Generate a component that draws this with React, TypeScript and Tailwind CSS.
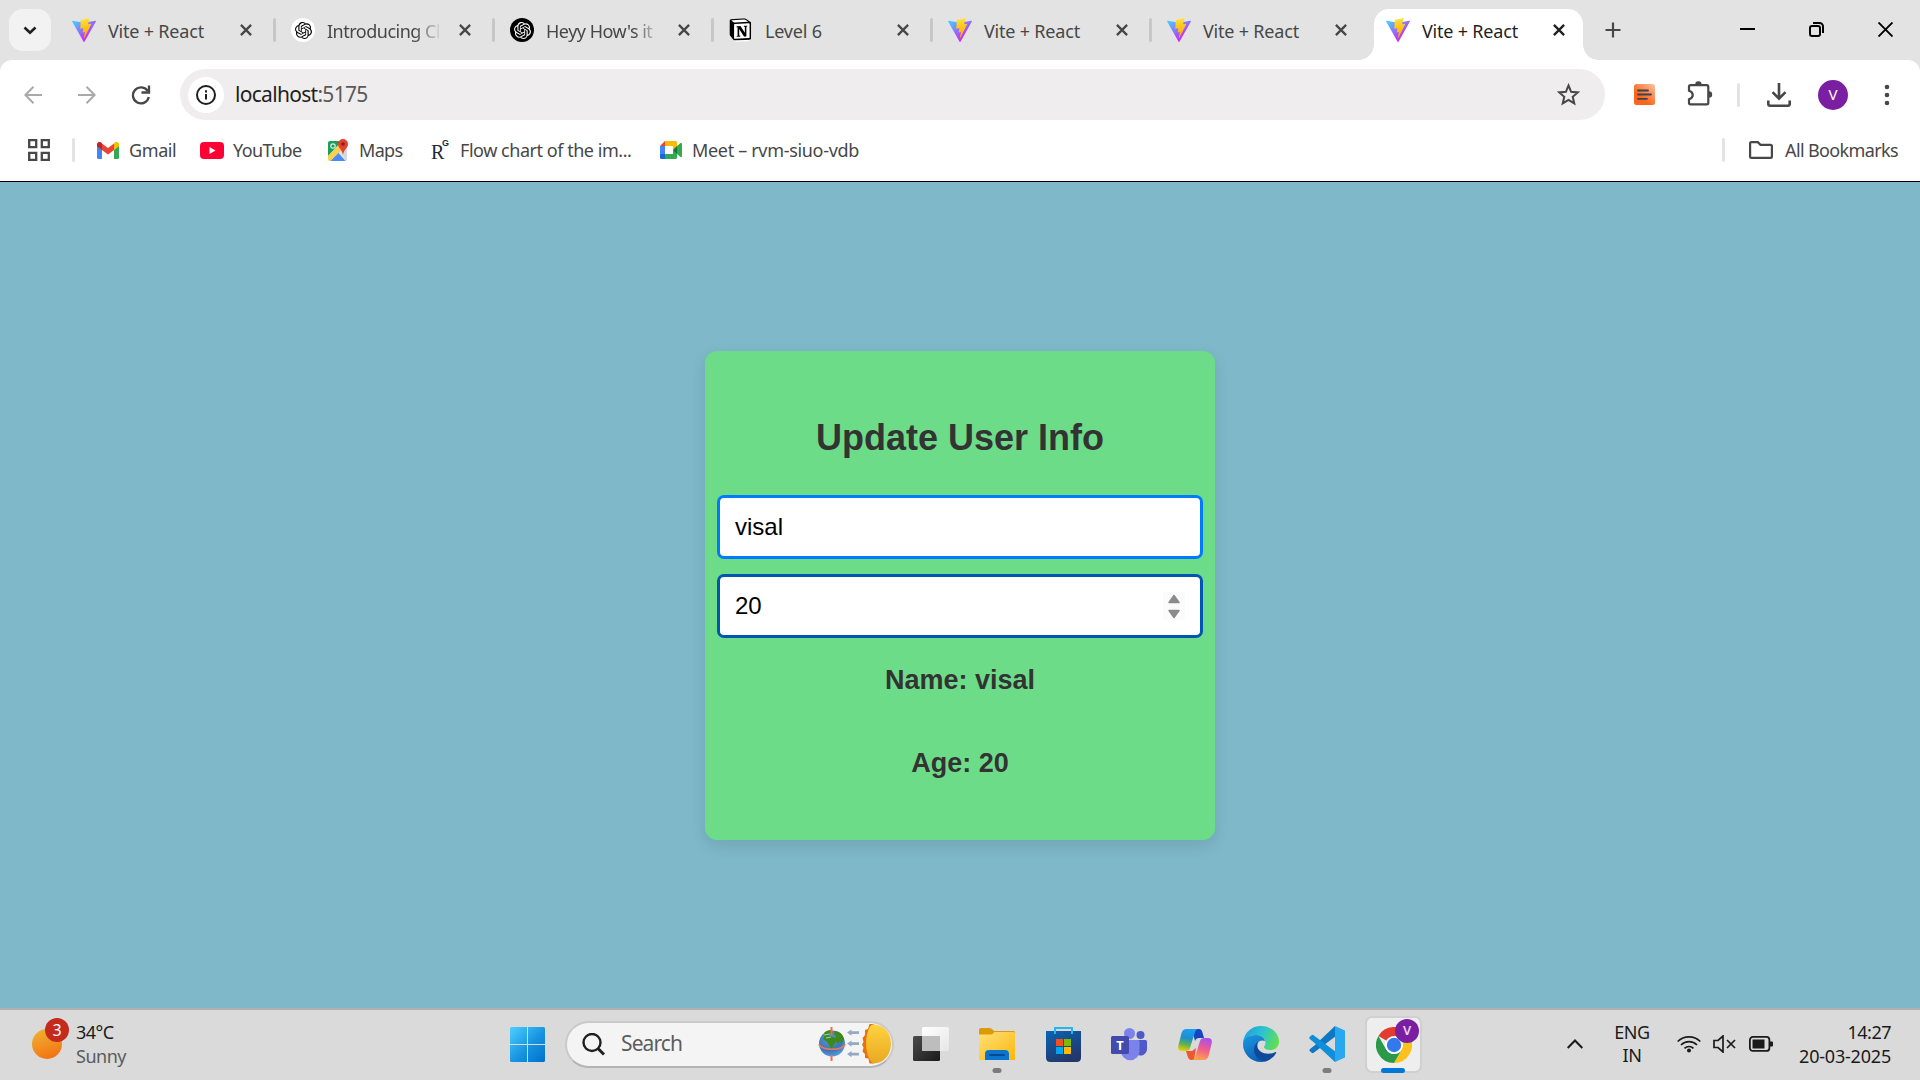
import React from 'react';
import { SiOpenai, SiNotion } from 'react-icons/si';

const ViteLogo = () => (
  <svg width="24" height="24" viewBox="0 0 256 257" className="shrink-0">
    <defs>
      <linearGradient id="vite-a" x1="-.8%" x2="57.6%" y1="7.7%" y2="78.4%">
        <stop offset="0%" stopColor="#41D1FF" />
        <stop offset="100%" stopColor="#BD34FE" />
      </linearGradient>
      <linearGradient id="vite-b" x1="43.4%" x2="50.3%" y1="2.2%" y2="89%">
        <stop offset="0%" stopColor="#FFEA83" />
        <stop offset="8.3%" stopColor="#FFDD35" />
        <stop offset="100%" stopColor="#FFA800" />
      </linearGradient>
    </defs>
    <path fill="url(#vite-a)" d="M255.153 37.938L134.897 252.976c-2.483 4.44-8.862 4.466-11.382.048L.875 37.958c-2.746-4.814 1.371-10.646 6.827-9.67l120.385 21.517a6.537 6.537 0 0 0 2.322-.004l117.867-21.483c5.438-.991 9.574 4.796 6.877 9.62Z" />
    <path fill="url(#vite-b)" d="M185.432.063L96.44 17.501a3.268 3.268 0 0 0-2.634 3.014l-5.474 92.456a3.268 3.268 0 0 0 3.997 3.378l24.777-5.718c2.318-.535 4.413 1.507 3.936 3.838l-7.361 36.047c-.495 2.426 1.782 4.5 4.151 3.78l15.304-4.649c2.372-.72 4.652 1.36 4.15 3.788l-11.698 56.621c-.732 3.542 3.979 5.473 5.943 2.437l1.313-2.028l72.516-144.72c1.215-2.423-.88-5.186-3.54-4.672l-25.505 4.922c-2.396.462-4.435-1.77-3.759-4.114l16.646-57.705c.677-2.35-1.37-4.583-3.769-4.113Z" />
  </svg>
);

const GptLight = () => (
  <span className="flex size-6 shrink-0 items-center justify-center rounded-full bg-white text-black">
    <SiOpenai size={17} />
  </span>
);

const GptDark = () => (
  <span className="flex size-6 shrink-0 items-center justify-center rounded-full bg-black text-white">
    <SiOpenai size={17} />
  </span>
);

const Notion = () => (
  <svg width="24" height="24" viewBox="0 0 24 24" className="shrink-0">
    <path d="M1.500 2.500 17 .8l4.800 3.400v17L19 23.200 6.500 23.800l-5-5.500z" fill="#fff" />
    <g transform="translate(.2 .2) scale(.93)"><SiNotion size={24} color="#000" /></g>
  </svg>
);

const CloseX = ({ color }: { color: string }) => (
  <svg width="12" height="12" viewBox="0 0 12 12" stroke={color} strokeWidth="2.3" className="shrink-0">
    <path d="M.9.9 11.1 11.1M11.1.9.9 11.1" />
  </svg>
);

const tabs = [
  { icon: <ViteLogo />, title: 'Vite + React', fade: false },
  { icon: <GptLight />, title: 'Introducing Ch', fade: true },
  { icon: <GptDark />, title: "Heyy How's it", fade: true },
  { icon: <Notion />, title: 'Level 6', fade: false },
  { icon: <ViteLogo />, title: 'Vite + React', fade: false },
  { icon: <ViteLogo />, title: 'Vite + React', fade: false },
];

function TabStrip() {
  return (
    <div className="flex h-[60px] bg-[#e3e3e3]">
      <button className="mt-[9px] ml-[9px] flex size-[42px] items-center justify-center rounded-[14px] bg-[#f2f2f2]">
        <svg width="14" height="9" viewBox="0 0 14 9" fill="none" stroke="#1f1f1f" strokeWidth="2.6"><path d="M1.5 1.5 7 6.8l5.500-5.300" /></svg>
      </button>
      <div className="ml-[9px] flex">
        {tabs.map((t, i) => (
          <div key={i} className="flex h-[60px] w-[219px] items-center pl-3">
            {t.icon}
            <span
              className={
                t.fade
                  ? 'mt-[3px] ml-3 w-[112px] text-[18px] tracking-[-0.5px] whitespace-nowrap text-[#474747] [mask-image:linear-gradient(to_right,black_78%,transparent_103%)]'
                  : 'mt-[3px] ml-3 w-[112px] text-[18px] tracking-[-0.2px] whitespace-nowrap text-[#474747]'
              }
            >
              {t.title}
            </span>
            <span className="ml-5"><CloseX color="#474747" /></span>
            <span className={i === 5 ? 'hidden' : 'ml-[21px] h-6 w-[3px] rounded-full bg-[#c7c7c7]'} />
          </div>
        ))}
        <div className="relative mt-[9px] mr-[10px] flex h-[51px] w-[209px] items-center rounded-t-[15px] bg-white pb-[9px] pl-3">
          <span className="absolute bottom-0 left-[-15px] size-[15px] bg-[radial-gradient(circle_at_0_0,transparent_14.5px,white_15px)]" />
          <span className="absolute right-[-15px] bottom-0 size-[15px] bg-[radial-gradient(circle_at_100%_0,transparent_14.5px,white_15px)]" />
          <ViteLogo />
          <span className="mt-[3px] ml-3 w-[112px] text-[18px] tracking-[-0.2px] whitespace-nowrap text-[#1f1f1f]">Vite + React</span>
          <span className="ml-[19px]"><CloseX color="#1f1f1f" /></span>
        </div>
      </div>
      <svg width="16" height="16" viewBox="0 0 16 16" stroke="#474747" strokeWidth="2.2" className="mt-[22px] ml-[12px]"><path d="M8 .5v15M.5 8h15" /></svg>
      <div className="mt-[22px] mr-[27px] ml-auto flex gap-[54px]">
        <svg width="15" height="15" viewBox="0 0 15 15"><path d="M0 6h15v2H0z" /></svg>
        <svg width="15" height="15" viewBox="0 0 15 15" fill="none" stroke="#000" strokeWidth="2">
          <rect x="1" y="4" width="10" height="10" rx="2" />
          <path d="M4 1h6.500a3.500 3.500 0 0 1 3.500 3.500V11" />
        </svg>
        <svg width="15" height="15" viewBox="0 0 15 15" stroke="#000" strokeWidth="1.900"><path d="m.5.5 14 14M14.500.5l-14 14" /></svg>
      </div>
    </div>
  );
}

function Toolbar() {
  return (
    <div className="bg-[#e3e3e3]">
      <div className="flex h-[69px] items-center rounded-t-[12px] bg-white">
        <svg width="18" height="18" viewBox="0 0 18 18" fill="none" stroke="#a9a9a9" strokeWidth="2" className="ml-6"><path d="M18 9H1.500M9.500.8 1.400 9l8.100 8.200" /></svg>
        <svg width="18" height="18" viewBox="0 0 18 18" fill="none" stroke="#a9a9a9" strokeWidth="2" className="ml-9"><path d="M0 9h16.500M8.500.8 16.600 9l-8.100 8.200" /></svg>
        <svg width="20" height="20" viewBox="0 0 20 20" fill="none" stroke="#474747" strokeWidth="2.300" className="ml-[35px]">
          <path d="M16.800 6.200A8 8 0 1 0 17.800 12" />
          <path d="M18 .5v7h-7.500" />
        </svg>
        <div className="ml-[29px] flex h-[51px] w-[1425px] items-center rounded-full bg-[#efedee]">
          <span className="ml-2 flex size-9 items-center justify-center rounded-full bg-white">
            <svg width="20" height="20" viewBox="0 0 20 20" fill="none" stroke="#1f1f1f" strokeWidth="2"><circle cx="10" cy="10" r="9" /><path d="M10 9v5.500M10 5.300v2.200" /></svg>
          </span>
          <span className="ml-[11px] text-[21px] tracking-[-0.7px] text-[#1f1f1f]">localhost<span className="text-[#5a5a5a]">:5175</span></span>
          <svg width="23" height="23" viewBox="0 0 24 24" fill="none" stroke="#474747" strokeWidth="2.100" className="mr-[25px] ml-auto"><path d="m12 2.600 2.700 6.600 7 .6-5.300 4.600 1.600 6.900-6-3.700-6 3.700 1.600-6.900L2.300 9.800l7-.6z" /></svg>
        </div>
        <svg width="21" height="21" viewBox="0 0 21 21" className="ml-[29px]">
          <defs><linearGradient id="org" x1="1" y1="0" x2=".4" y2=".7"><stop stopColor="#fdc3a0" /><stop offset="1" stopColor="#fa651c" /></linearGradient></defs>
          <rect width="21" height="21" rx="2.500" fill="url(#org)" />
          <path d="M4 6.500h10M4 10.500h13M4 14.800h9" stroke="#3b4350" strokeWidth="1.800" strokeLinecap="round" />
        </svg>
        <svg width="26" height="26" viewBox="0 0 26 26" className="-mt-1 ml-8">
          <path d="M3.500 5.200h16.300q1.500 0 1.500 1.500v16.100q0 1.500-1.500 1.500H3.500q-1.500 0-1.500-1.500v-3.600c5-1.500 5-7 0-8.500V6.700q0-1.500 1.500-1.500z" fill="none" stroke="#474747" strokeWidth="2.200" />
          <path d="M8.200 4.500a3.200 3.200 0 0 1 6.400 0zM22 11.200a3.200 3.200 0 0 1 0 6.400z" fill="#474747" />
        </svg>
        <span className="ml-6 h-6 w-[3px] rounded-full bg-[#e3e3e3]" />
        <svg width="24" height="24" viewBox="0 0 24 24" fill="none" stroke="#474747" strokeWidth="2.600" className="ml-[27px]"><path d="M12 0v15M5.500 9.200 12 15.700l6.500-6.500" /><path d="M1.300 17.500v3.200q0 2 2 2h17.400q2 0 2-2v-3.200" /></svg>
        <span className="ml-[27px] flex size-[30px] items-center justify-center rounded-full bg-[#7b1fa2] text-[15px] text-white">V</span>
        <svg width="6" height="24" viewBox="0 0 6 24" fill="#474747" className="ml-9"><circle cx="3" cy="4" r="2.300" /><circle cx="3" cy="12" r="2.300" /><circle cx="3" cy="20" r="2.300" /></svg>
      </div>
    </div>
  );
}

const Gmail = () => (
  <svg width="22" height="17" viewBox="0 0 22 17" className="shrink-0">
    <path d="M0 3v12.500Q0 17 1.500 17H5V7z" fill="#4285f4" />
    <path d="M22 3v12.500q0 1.500-1.500 1.500H17V7z" fill="#34a853" />
    <path d="M17 1.800V8l5-3.800V2.500C22 .3 19.500-.8 17.700.5z" fill="#fbbc04" />
    <path d="M0 2.500v1.700L5 8V1.500L4.300.5C2.500-.8 0 .3 0 2.500z" fill="#c5221f" />
    <path d="M5 8V1.500L11 6l6-4.500V8l-6 4.500z" fill="#ea4335" />
  </svg>
);
const YouTube = () => (
  <svg width="24" height="17" viewBox="0 0 24 17" className="shrink-0"><rect width="24" height="17" rx="4" fill="#ff0033" /><path d="M9.500 5v7l6-3.500z" fill="#fff" /></svg>
);
const Maps = () => (
  <svg width="22" height="23" viewBox="0 0 22 23" className="shrink-0">
    <rect x="1" y="2" width="19" height="20" rx="2" fill="#dfe3e6" />
    <path d="M1 4q0-2 2-2h12L1 17z" fill="#1e9e57" />
    <path d="M1 17 15 3l3 5L3 22q-2 0-2-2z" fill="#f8d24a" />
    <path d="M3.500 22 11.500 14l7 8z" fill="#4a8af4" />
    <path d="m14 11.500 6-4V20q0 1.500-1 2z" fill="#d5d9dc" />
    <circle cx="6" cy="7" r="2.200" fill="none" stroke="#d9f2e3" strokeWidth="1.200" />
    <path d="M16 0a5 5 0 0 1 5 5c0 4-4 5-5 11-1-6-5-7-5-11a5 5 0 0 1 5-5z" fill="#e34133" />
    <circle cx="16" cy="5" r="1.800" fill="#8c1e17" />
  </svg>
);
const RG = () => (
  <span className="relative block h-6 w-[19px] shrink-0 font-['Liberation_Serif',serif] text-[#1c2b33]">
    <span className="absolute top-[4px] left-0 text-[20px] leading-5">R</span>
    <span className="absolute top-[1px] left-[11px] font-['Liberation_Sans',sans-serif] text-[9px] leading-[9px] font-bold">G</span>
  </span>
);
const Meet = () => (
  <svg width="22" height="18" viewBox="0 0 22 18" className="shrink-0">
    <path d="M0 5h5v8H0z" fill="#4285f4" />
    <path d="M5 0v5H0z" fill="#ea4335" />
    <path d="M5 0h10.500Q17 0 17 1.500V7l-4 2V5H5z" fill="#fbbc04" />
    <path d="M5 13h8V9l4 2v5.500q0 1.500-1.500 1.500H5z" fill="#34a853" />
    <path d="M0 13h5v5H1.500Q0 18 0 16.500z" fill="#1967d2" />
    <path d="m13 9 4-4v8z" fill="#0b7a34" />
    <path d="m17 5 3.500-3Q22 1.500 22 3v12q0 1.500-1.500 1L17 13z" fill="#34a853" />
  </svg>
);

function Bookmarks() {
  return (
    <div className="flex h-[52px] items-center bg-white pb-[10px] text-[18px] text-[#474747]">
      <svg width="22" height="22" viewBox="0 0 22 22" fill="none" stroke="#474747" strokeWidth="2.300" className="ml-7"><path d="M1.200 1.200h7v7h-7zM13.800 1.200h7v7h-7zM1.200 13.800h7v7h-7zM13.800 13.800h7v7h-7z" /></svg>
      <span className="ml-[22px] h-6 w-[3px] rounded-full bg-[#e3e3e3]" />
      <div className="ml-[22px] flex w-[103px] items-center gap-[10px]"><Gmail /><span className="tracking-[-0.4px]">Gmail</span></div>
      <div className="flex w-[127px] items-center gap-[9px]"><YouTube /><span className="tracking-[-0.6px]">YouTube</span></div>
      <div className="flex w-[104px] items-center gap-[10px]"><Maps /><span className="tracking-[-0.7px]">Maps</span></div>
      <div className="flex w-[229px] items-center gap-[10px]"><RG /><span className="tracking-[-0.46px] whitespace-nowrap">Flow chart of the im...</span></div>
      <div className="flex items-center gap-[10px]"><Meet /><span className="tracking-[-0.32px] whitespace-nowrap">Meet – rvm-siuo-vdb</span></div>
      <span className="ml-auto h-6 w-[3px] rounded-full bg-[#e3e3e3]" />
      <svg width="24" height="18" viewBox="0 0 24 18" fill="none" stroke="#474747" strokeWidth="2.200" className="ml-6"><path d="M1.100 2.500q0-1.400 1.400-1.400h6.300l2.700 2.700h10q1.400 0 1.400 1.400v10.300q0 1.400-1.400 1.400h-19q-1.400 0-1.400-1.400z" /></svg>
      <span className="ml-3 w-[135px] tracking-[-0.62px] whitespace-nowrap">All Bookmarks</span>
    </div>
  );
}

function Page() {
  return (
    <main className="flex flex-1 justify-center bg-[#7eb8c9] font-['Liberation_Sans',Arial,sans-serif]">
      <div className="mt-[169px] flex h-[489px] w-[510px] flex-col items-center rounded-[12px] bg-[#6ddc88] pt-[66px] text-[#333] shadow-[0_6px_15px_rgba(0,0,0,0.1)]">
        <h2 className="text-[36px] leading-[41px] font-bold">Update User Info</h2>
        <div className="mt-[37px] flex h-16 w-[486px] items-center rounded-[7px] border-3 border-[#007bff] bg-white px-[15px] text-[24px] text-black">visal</div>
        <div className="mt-[15px] flex h-16 w-[486px] items-center justify-between rounded-[7px] border-3 border-[#0056b3] bg-white px-[15px] text-[24px] text-black">
          <span>20</span>
          <svg width="22" height="28" viewBox="0 0 22 28" className="-mt-px">
            <rect width="22" height="28" fill="#fbfbfb" />
            <path d="M11 3.500 6 10.500h10zM11 25.500 6 18.500h10z" fill="#8b8b8b" stroke="#8b8b8b" strokeWidth="1.500" strokeLinejoin="round" />
          </svg>
        </div>
        <h3 className="mt-[27px] text-[27px] leading-[31px] font-bold">Name: visal</h3>
        <h3 className="mt-[52px] text-[27px] leading-[31px] font-bold">Age: 20</h3>
      </div>
    </main>
  );
}

const Start = () => (
  <svg width="35" height="35" viewBox="0 0 35 35">
    <defs><linearGradient id="win" x1="0" y1="0" x2="1" y2="1" gradientUnits="objectBoundingBox"><stop stopColor="#4dd0ff" /><stop offset=".55" stopColor="#1793e0" /><stop offset="1" stopColor="#0070cf" /></linearGradient></defs>
    <path d="M1.500 0H17v17H0V1.500Q0 0 1.500 0zM18 0h15.500Q35 0 35 1.500V17H18zM0 18h17v17H1.500Q0 35 0 33.500zM18 18h17v15.500q0 1.500-1.500 1.500H18z" fill="url(#win)" />
  </svg>
);

const SearchArt = () => (
  <svg width="74" height="40" viewBox="0 0 74 40">
    <defs>
      <linearGradient id="sn" x1="0" y1="0" x2="0" y2="1"><stop stopColor="#ffd23e" /><stop offset="1" stopColor="#e8a822" /></linearGradient>
      <radialGradient id="gl" cx=".4" cy=".3" r=".8"><stop stopColor="#5f9bd0" /><stop offset=".6" stopColor="#3c74b4" /><stop offset="1" stopColor="#5fa8f0" /></radialGradient>
    </defs>
    <circle cx="14" cy="19.500" r="13" fill="url(#gl)" />
    <path d="M6 9c3-3 7-3.500 8-2.500l1 3-4 2 3 1 4 2v3l-3 5-2 3-1.500-4L9 18l-4-3 1-2zM17 7c5 0 8 4 9 8l-2 4-2-2-2 3-3-4 1-4-2-2z" fill="#3c8a1c" />
    <path d="M6 11l6-1M8 14l5-1" stroke="#9fd0e8" />
    <path d="M13.500 3v8M13.500 31v6" stroke="#f26d50" strokeWidth="2" />
    <path d="M1 20c1 7 25 7 26 0" fill="none" stroke="#f2765a" strokeWidth="1.500" />
    <path d="m29 8.500 4.500-3V7.300H41v2.600h-7.500v1.800zM29 19.500l4.500-3v1.800H41v2.600h-7.500v1.800zM29 30l4.500-3v1.800H41v2.600h-7.500v1.800z" fill="#93a9c4" />
    <path d="M56 0h-4.500l-1.500 5-3 1v5l-2.500 3 1 4-1.500 2.500 1.500 3-1 4 2.500 2.500v4l3.500.5 1 5H56z" fill="#e8710c" />
    <path d="M54 .5C66 0 73 9 73 20s-8 20-18 19.500C46 33 46 7 54 .5z" fill="url(#sn)" />
  </svg>
);

const TaskView = () => (
  <svg width="36" height="35" viewBox="0 0 36 35">
    <defs><linearGradient id="tv" x1="0" y1="0" x2="1" y2="1"><stop stopColor="#4b4b4b" /><stop offset="1" stopColor="#1a1a1a" /></linearGradient><linearGradient id="tw" x1="0" y1="0" x2="1" y2="1"><stop stopColor="#fff" /><stop offset="1" stopColor="#e6e6e6" /></linearGradient></defs>
    <rect y="9" width="27" height="25" rx="1.500" fill="url(#tv)" />
    <rect x="9" y="0" width="27" height="24" rx="1.500" fill="url(#tw)" />
    <path d="M9 9h18v15H10.500Q9 24 9 22.500z" fill="#bdbdbd" />
  </svg>
);

const Explorer = () => (
  <svg width="36" height="33" viewBox="0 0 36 33">
    <defs><linearGradient id="ex" x1="0" y1="0" x2="1" y2="1"><stop stopColor="#ffe07a" /><stop offset="1" stopColor="#fbb80c" /></linearGradient></defs>
    <path d="M0 2Q0 0 2 0h8q2 0 3 1l2 2h19.500Q36 3 36 4.500V10H0z" fill="#dc9a06" />
    <path d="M0 6.500h11.500q1.500 0 3-1.500l1-1H34.500Q36 4 36 5.500V32H0z" fill="url(#ex)" />
    <path d="M6 32v-6q0-4 4-4h16q4 0 4 4v6z" fill="#0a74cf" />
    <path d="M11 27h14" stroke="#04498f" strokeWidth="2" strokeLinecap="round" />
  </svg>
);

const Store = () => (
  <svg width="35" height="35" viewBox="0 0 35 35">
    <defs><linearGradient id="st" x1="0" y1="0" x2=".5" y2="1"><stop stopColor="#0a63b4" /><stop offset="1" stopColor="#22386c" /></linearGradient></defs>
    <path d="M0 4h35v26.500q0 4.500-4.500 4.500h-26Q0 35 0 30.500z" fill="url(#st)" />
    <path d="M9 7V1h17v6" fill="none" stroke="#24b5f5" strokeWidth="2" />
    <path d="M10 12h7v7h-7z" fill="#f25022" /><path d="M18 12h7v7h-7z" fill="#7fba00" /><path d="M10 20h7v7h-7z" fill="#00a4ef" /><path d="M18 20h7v7h-7z" fill="#ffb900" />
  </svg>
);

const Teams = () => (
  <div className="relative h-[33px] w-9">
    <svg width="36" height="33" viewBox="0 0 36 33">
      <circle cx="29.500" cy="7" r="4" fill="#5059c9" />
      <path d="M26 12h8.500Q36 12 36 13.500V21a6.500 6.500 0 0 1-10 5.500z" fill="#5059c9" />
      <circle cx="18.500" cy="5.500" r="5.500" fill="#7b83eb" />
      <path d="M10 12h17q1.500 0 1.500 1.500V23a9 9 0 0 1-18.500 0z" fill="#7b83eb" />
      <rect y="8" width="18" height="18" rx="1.500" fill="#4449ac" />
    </svg>
    <span className="absolute top-[8px] left-0 w-[18px] text-center text-[13px] leading-[18px] font-bold text-white">T</span>
  </div>
);

const Copilot = () => (
  <svg width="34" height="31" viewBox="0 0 34 31">
    <defs>
      <linearGradient id="c1" x1="0.400" y1="0" x2=".2" y2="1"><stop stopColor="#1b9df5" /><stop offset=".4" stopColor="#1f90c8" /><stop offset=".7" stopColor="#64b548" /><stop offset="1" stopColor="#f5d000" /></linearGradient>
      <linearGradient id="c2" x1=".7" y1="0" x2=".4" y2="1"><stop stopColor="#a74ff0" /><stop offset=".5" stopColor="#f05c8c" /><stop offset="1" stopColor="#ffa24a" /></linearGradient>
    </defs>
    <path d="M14 0h7q2.500 0 3.300 3L26 9h-5q-3 0-4 3z" fill="#1446c0" />
    <path d="M8 22h6l4-3-2 12h-2.500Q10.500 31 9.500 27z" fill="#f0572e" />
    <path d="M8.500 0H20q-2 0-3 3l-5 16q-1 3-4 3H4q-5 0-3.500-6l3-12Q4.800 0 8.500 0z" fill="url(#c1)" />
    <path d="M25.500 31H14q2 0 3-3l5-16q1-3 4-3h4q5 0 3.500 6l-3 12q-1.300 4-5 4z" fill="url(#c2)" />
  </svg>
);

const Edge = () => (
  <svg width="36" height="36" viewBox="0 0 36 36">
    <defs>
      <linearGradient id="e1" x1="0" y1=".3" x2="1" y2=".6"><stop stopColor="#1f9fe0" /><stop offset=".5" stopColor="#2cc4d0" /><stop offset="1" stopColor="#62e04a" /></linearGradient>
      <linearGradient id="e2" x1="0" y1="0" x2=".4" y2="1"><stop stopColor="#1a9ae0" /><stop offset="1" stopColor="#0c62b8" /></linearGradient>
    </defs>
    <path d="M0 17C1 6 9 0 18 0c11 0 18 8 18 15.500 0 6-4.500 8.500-8.500 8.500-4 0-6.500-1.500-6.500-3 0-1 1.500-1.500 1.500-4 0-4-4-8-10-8C6 9 1.500 12 0 17z" fill="url(#e1)" />
    <path d="M0 18C0 12 6 9 12.500 9c5 0 8.500 2.500 9.500 6-5-2-9 1-9 7 0 8 6 13 11 13-2 .7-4 1-6 1C8 36 0 28 0 18z" fill="url(#e2)" />
    <path d="M17.500 14.500C14 16 11 19 11 23.500 11 30 16.500 35.500 23 35.300c4-1.300 8-4.300 10-8 .5-1-.3-1.500-1-1-9 4-19-1-17.500-8 .3-2 1.500-3 3-3.800z" fill="#10499a" />
  </svg>
);

const VSCode = () => (
  <svg width="36" height="36" viewBox="0 0 36 36">
    <path d="M26 0 5.500 19.500 1 23q-1 1-.3 2l2 1.800q1 .8 2 0L27 10z" fill="#0f78c2" />
    <path d="M26 36 5 16.500.8 13q-1-1-.2-2l2-1.800q1-.8 2 0L27 26z" fill="#0f8fd9" />
    <path d="M26 0 36 4.500v27L26 36q-.5-.3 0-1.500V1.500Q25.500.4 26 0z" fill="#28a8f0" />
  </svg>
);

const Chrome = () => (
  <svg width="36" height="36" viewBox="0 0 36 36">
    <path d="M18 18 2.400 9A18 18 0 0 1 33.600 9z" fill="#e33b2e" />
    <path d="M18 9h15.600A18 18 0 0 1 18 36l7.800-13.500z" fill="#fcc21b" />
    <path d="M2.400 9 10.200 22.500A9 9 0 0 0 25.800 22.500L18 36A18 18 0 0 1 2.400 9z" fill="#2a9a48" />
    <circle cx="18" cy="18" r="9" fill="#fff" /><circle cx="18" cy="18" r="7.200" fill="#3478ee" />
  </svg>
);

const Dash = () => <span className="absolute bottom-[5px] left-1/2 h-[5px] w-[9px] -translate-x-1/2 rounded-full bg-[#7c7c7c]" />;

const apps = [
  { el: <TaskView />, open: false },
  { el: <Explorer />, open: true },
  { el: <Store />, open: false },
  { el: <Teams />, open: false },
  { el: <Copilot />, open: false },
  { el: <Edge />, open: false },
  { el: <VSCode />, open: true },
];

function Taskbar() {
  return (
    <footer className="flex h-[72px] items-center border-t-2 border-[#b0b0b0] bg-[#dadada] pb-[2px] text-[18px] text-[#1a1a1a]">
      <div className="flex w-[510px] items-center pl-8">
        <div className="relative size-[30px] rounded-full bg-linear-160 from-[#eeb432] to-[#f2690d]">
          <span className="absolute top-[-11px] left-[13px] flex size-6 items-center justify-center rounded-full bg-[#c42b1c] text-[16px] text-white">3</span>
        </div>
        <div className="ml-[14px] leading-6">
          <div className="tracking-[-0.5px]">34°C</div>
          <div className="tracking-[-0.5px] text-[#5c5c5c]">Sunny</div>
        </div>
      </div>
      <Start />
      <div className="ml-[20px] flex h-[47px] w-[329px] items-center rounded-full border-2 border-[#cacaca] border-b-[#b4b4b4] bg-[#f4f4f4]">
        <svg width="23" height="23" viewBox="0 0 23 23" fill="none" stroke="#1f1f1f" strokeWidth="2.400" className="ml-[15px]"><circle cx="10" cy="9.500" r="8.500" /><path d="m16 15.500 6 6" strokeWidth="3" /></svg>
        <span className="ml-4 text-[21px] tracking-[-0.9px] text-[#5c5c5c]">Search</span>
        <span className="ml-auto"><SearchArt /></span>
      </div>
      <div className="ml-[4px] flex h-full">
        {apps.map((a, i) => (
          <div key={i} className="relative flex h-full w-[66px] items-center justify-center">
            {a.el}
            {a.open && <Dash />}
          </div>
        ))}
        <div className="relative mt-[6px] ml-[5px] flex h-[57px] w-[57px] items-center justify-center rounded-[7px] border-2 border-[#d0d0d0] bg-[#eeeeee]">
          <Chrome />
          <span className="absolute top-px right-px flex size-6 items-center justify-center rounded-full bg-[#7b1fa2] text-[13px] font-semibold text-[#e8d5f0]">V</span>
          <span className="absolute -bottom-[2px] left-[14px] h-[5px] w-6 rounded-full bg-[#0078d7]" />
        </div>
      </div>
      <svg width="16" height="10" viewBox="0 0 16 10" fill="none" stroke="#1a1a1a" strokeWidth="2" className="ml-auto"><path d="M.7 9 8 1.500 15.300 9" /></svg>
      <div className="ml-[31px] w-[36px] text-center leading-[23px] tracking-[-0.5px]">ENG<br />IN</div>
      <svg width="24" height="18" viewBox="0 0 24 18" fill="none" stroke="#1a1a1a" strokeWidth="1.700" className="ml-[27px]">
        <path d="M.7 6.500a16 16 0 0 1 22.600 0M4 10a11.300 11.300 0 0 1 16 0M7.500 13.300a6.500 6.500 0 0 1 9 0" /><circle cx="12" cy="15.500" r="2" fill="#1a1a1a" stroke="none" />
      </svg>
      <svg width="23" height="18" viewBox="0 0 23 18" fill="none" stroke="#1a1a1a" strokeWidth="1.700" className="ml-3"><path d="M1 5.500h4L10 1v16l-5-4.500H1zM14 5l8 8M22 5l-8 8" /></svg>
      <svg width="24" height="16" viewBox="0 0 24 16" className="ml-[13px]"><rect x=".9" y=".9" width="19.500" height="14" rx="3" fill="none" stroke="#1a1a1a" strokeWidth="1.800" /><path d="M3.500 3.500h12v9h-12zM21 5.500h2q1 0 1 1v3q0 1-1 1h-2z" fill="#1a1a1a" /></svg>
      <div className="mr-[29px] ml-[25px] w-[93px] text-right leading-6 whitespace-nowrap"><div className="tracking-[-0.5px]">14:27</div><div className="tracking-[-0.2px]">20-03-2025</div></div>
    </footer>
  );
}

export default function App() {
  return (
    <div className="flex h-[1080px] w-[1920px] flex-col overflow-hidden font-['Noto_Sans','Open_Sans',sans-serif]">
      <TabStrip />
      <Toolbar />
      <Bookmarks />
      <div className="h-px bg-black" />
      <Page />
      <Taskbar />
    </div>
  );
}
